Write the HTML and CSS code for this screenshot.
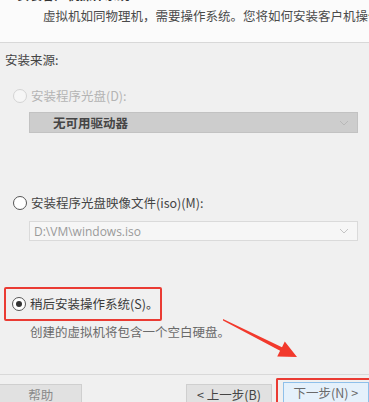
FILE: index.html
```html
<!DOCTYPE html>
<html>
<head>
  <meta charset="utf-8">
  <title>新建虚拟机向导</title>
  <link rel="stylesheet" href="styles.css">
</head>
<body>
  <div class="wizard">
    <div class="wizard-header">
      <div class="wizard-title">安装客户机操作系统</div>
      <div class="wizard-subtitle">虚拟机如同物理机，需要操作系统。您将如何安装客户机操作系统？</div>
    </div>

    <div class="wizard-body">
      <div class="group-label">安装来源:</div>

      <label class="option disabled">
        <span class="radio"></span>
        <span>安装程序光盘(D):</span>
      </label>
      <div class="select select-disabled">
        <span>无可用驱动器</span>
        <svg class="caret" width="10" height="6" viewBox="0 0 10 6"><path d="M1 1 L5 5 L9 1" fill="none" stroke="#b8b8b8" stroke-width="1"/></svg>
      </div>

      <label class="option option-iso">
        <span class="radio"></span>
        <span>安装程序光盘映像文件(iso)(M):</span>
      </label>
      <div class="select select-combo">
        <span>D:\VM\windows.iso</span>
        <svg class="caret" width="10" height="6" viewBox="0 0 10 6"><path d="M1 1 L5 5 L9 1" fill="none" stroke="#c4c4c4" stroke-width="1"/></svg>
      </div>

      <div class="highlight-box">
        <label class="option">
          <span class="radio checked"></span>
          <span>稍后安装操作系统(S)。</span>
        </label>
      </div>
      <div class="hint">创建的虚拟机将包含一个空白硬盘。</div>
    </div>

    <div class="wizard-footer">
      <button class="btn btn-help">帮助</button>
      <button class="btn btn-back">&lt; 上一步(B)</button>
      <div class="highlight-next">
        <button class="btn btn-next">下一步(N) &gt;</button>
      </div>
    </div>
  </div>

  <svg class="annotation-arrow" width="369" height="402" viewBox="0 0 369 402">
    <polygon points="223,319 282,347.2 284.8,341.6 297,357 277.2,356.4 280.1,350.8 223,320.6" fill="#f2392c"/>
  </svg>
</body>
</html>
```

FILE: styles.css
```css
body {
  margin: 0;
  width: 369px;
  height: 402px;
  overflow: hidden;
  position: relative;
  background-color: #f0f0f0;
  font-family: "Noto Sans CJK SC", "Open Sans", sans-serif;
  font-size: 12.5px;
  color: #3c3c3c;
}

.wizard {
  display: flex;
  flex-direction: column;
  height: 402px;
}

.wizard-header {
  height: 42px;
  background-color: #fbfbfb;
  border-bottom: 1px solid #d8d8d8;
  overflow: hidden;
}

.wizard-title {
  margin-top: -13px;
  padding-left: 17px;
  line-height: 16px;
  font-weight: bold;
  color: #333;
}

.wizard-subtitle {
  margin-top: 5px;
  padding-left: 43px;
  line-height: 16px;
  white-space: nowrap;
  color: #4a4a4a;
}

.wizard-body {
  display: flex;
  flex-direction: column;
  padding-left: 5px;
  flex: 1;
}

.group-label {
  margin-top: 9px;
  line-height: 16px;
  color: #444;
}

.option {
  display: flex;
  align-items: center;
  gap: 4px;
  padding-left: 8px;
  line-height: 16px;
  color: #444;
}

.option.disabled {
  margin-top: 20px;
  color: #b4b4b4;
}

.option-iso {
  margin-top: 62px;
}

.radio {
  width: 12px;
  height: 12px;
  border: 1px solid #555;
  border-radius: 50%;
  background-color: #fff;
  position: relative;
  flex: none;
}

.option.disabled .radio {
  border-color: #d4d4d4;
  background-color: #f6f6f6;
}

.radio.checked::after {
  content: "";
  position: absolute;
  left: 3px;
  top: 3px;
  width: 6px;
  height: 6px;
  border-radius: 50%;
  background-color: #333;
}

.select {
  display: flex;
  align-items: center;
  justify-content: space-between;
  margin-left: 24px;
  width: 329px;
  box-sizing: border-box;
  padding: 0 8px 0 4px;
}

.select-disabled {
  margin-top: 8px;
  height: 21px;
  background-color: #cdcdcd;
  border: 1px solid #c2c2c2;
  color: #454545;
  font-weight: bold;
}

.select-disabled span {
  padding-left: 19px;
}

.select-combo {
  margin-top: 10px;
  height: 20px;
  background-color: #f6f6f6;
  border: 1px solid #dadada;
  color: #9a9a9a;
  font-family: "Open Sans", sans-serif;
  font-size: 12px;
}

.highlight-box {
  margin-top: 46px;
  margin-left: -1px;
  width: 158px;
  height: 34px;
  box-sizing: border-box;
  border: 2px solid #ea3b33;
  border-radius: 2px;
  display: flex;
  align-items: center;
}

.highlight-box .option {
  padding-left: 6px;
  color: #3a3a3a;
}

.hint {
  margin-top: 3px;
  padding-left: 25px;
  line-height: 16px;
  color: #6a6a6a;
}

.wizard-footer {
  position: relative;
  height: 27px;
  border-top: 1px solid #d9d9d9;
  display: flex;
  align-items: flex-end;
}

.btn {
  font-family: "Noto Sans CJK SC", "Open Sans", sans-serif;
  font-size: 12.5px;
  height: 24px;
  box-sizing: border-box;
  background-color: #e1e1e1;
  border: 1px solid #cfcfcf;
  border-bottom: none;
  padding: 0;
  color: #555;
}

.btn-help {
  width: 84px;
  margin-left: -1px;
  color: #8a8a8a;
  height: 18px;
}

.btn-back {
  width: 86px;
  margin-left: 104px;
  height: 18px;
  color: #444;
}

.highlight-next {
  margin-left: 4px;
  width: 94px;
  height: 24px;
  box-sizing: border-box;
  border: 2px solid #ea3b33;
  border-right: none;
  border-bottom: none;
  border-radius: 2px 0 0 0;
  padding: 2px 0 0 5px;
  display: flex;
}

.btn-next {
  flex: 1;
  height: 20px;
  background-color: #e5f1fb;
  border-color: #8fc0ea;
  color: #6a6a6a;
}

.annotation-arrow {
  position: absolute;
  left: 0;
  top: 0;
  pointer-events: none;
}
```
